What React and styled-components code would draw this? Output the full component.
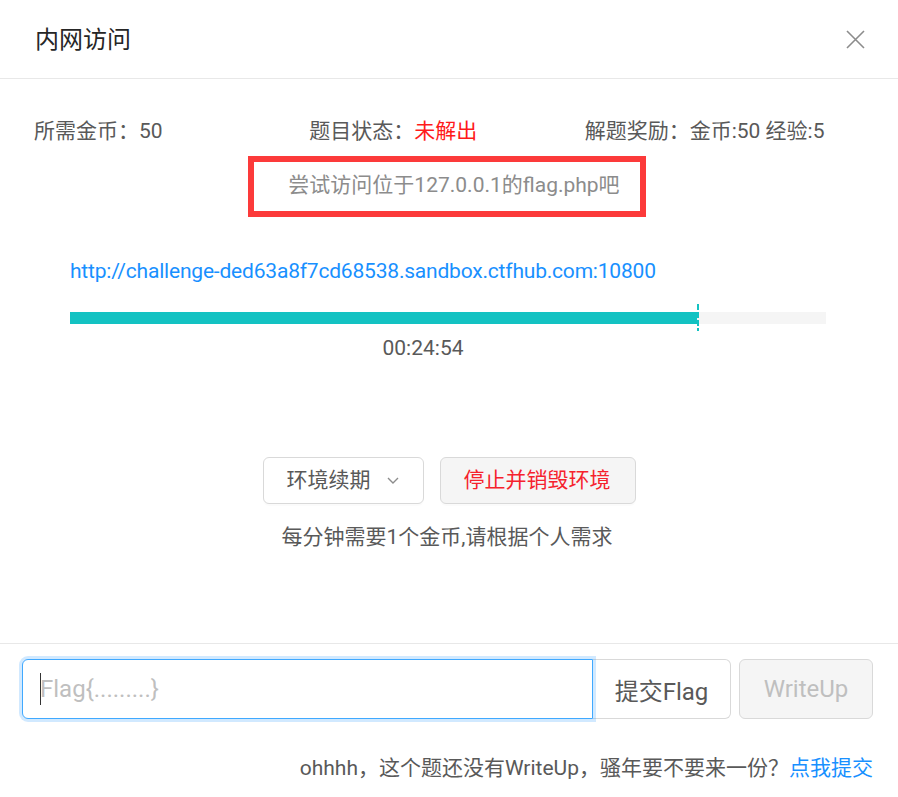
import React from 'react';
import styled, { createGlobalStyle } from 'styled-components';

const GlobalStyle = createGlobalStyle`
  html, body {
    margin: 0;
    padding: 0;
    background: #fff;
  }
  body {
    font-family: Roboto, "Noto Sans CJK SC", sans-serif;
    color: #595959;
  }
  * {
    box-sizing: border-box;
  }
`;

const CloseIcon = () => (
  <svg width="19" height="19" viewBox="0 0 19 19" fill="none">
    <path d="M1 1 L18 18 M18 1 L1 18" stroke="#8c8c8c" strokeWidth="1.6" />
  </svg>
);

const ChevronDown = () => (
  <svg width="12" height="7" viewBox="0 0 12 7" fill="none">
    <path d="M1 1 L6 6 L11 1" stroke="#8c8c8c" strokeWidth="1.4" />
  </svg>
);

export default function App() {
  return (
    <Modal>
      <GlobalStyle />
      <Header>
        <Title>内网访问</Title>
        <CloseButton aria-label="close">
          <CloseIcon />
        </CloseButton>
      </Header>

      <Body>
        <InfoRow>
          <InfoCol>所需金币：50</InfoCol>
          <InfoCol>
            题目状态：<Unsolved>未解出</Unsolved>
          </InfoCol>
          <InfoCol>解题奖励：金币:50 经验:5</InfoCol>
        </InfoRow>

        <HintRow>
          <HintBox>尝试访问位于127.0.0.1的flag.php吧</HintBox>
        </HintRow>

        <UrlLine href="#">
          http://challenge-ded63a8f7cd68538.sandbox.ctfhub.com:10800
        </UrlLine>

        <Progress>
          <ProgressFill style={{ width: `${(627 / 756) * 100}%` }} />
          <ProgressMark style={{ left: `${(628 / 756) * 100}%` }} />
        </Progress>
        <Timer>00:24:54</Timer>

        <ActionRow>
          <Button>
            环境续期
            <ChevronDown />
          </Button>
          <Button $danger>停止并销毁环境</Button>
        </ActionRow>
        <Note>每分钟需要1个金币,请根据个人需求</Note>
      </Body>

      <Footer>
        <SubmitRow>
          <FlagField>
            <FlagInput placeholder="Flag{.........}" />
          </FlagField>
          <SubmitButton>提交Flag</SubmitButton>
          <WriteUpButton disabled>WriteUp</WriteUpButton>
        </SubmitRow>
        <FooterText>
          ohhhh，这个题还没有WriteUp，骚年要不要来一份？<Link href="#">点我提交</Link>
        </FooterText>
      </Footer>
    </Modal>
  );
}

const Modal = styled.div`
  width: 898px;
  height: 797px;
  display: flex;
  flex-direction: column;
  background: #fff;
  overflow: hidden;
`;

const Header = styled.div`
  height: 79px;
  flex-shrink: 0;
  display: flex;
  align-items: center;
  justify-content: space-between;
  padding: 0 33px 0 35px;
  border-bottom: 1px solid #e8e8e8;
`;

const Title = styled.div`
  font-size: 24px;
  line-height: 32px;
  color: #262626;
  margin-top: 1px;
`;

const CloseButton = styled.button`
  border: none;
  background: transparent;
  padding: 0;
  width: 19px;
  height: 19px;
  display: flex;
  cursor: pointer;
`;

const Body = styled.div`
  flex: 1;
  padding: 0 38px 0 34px;
  display: flex;
  flex-direction: column;
`;

const InfoRow = styled.div`
  display: grid;
  grid-template-columns: repeat(3, 1fr);
  margin-top: 36px;
  font-size: 21px;
  line-height: 32px;
  color: #595959;
`;

const InfoCol = styled.div`
  white-space: nowrap;
`;

const Unsolved = styled.span`
  color: #ff1a1a;
`;

const HintRow = styled.div`
  display: flex;
  justify-content: center;
  margin-top: 9px;
`;

const HintBox = styled.div`
  border: 6px solid #fc3a3a;
  padding: 7px 20px 10px 34px;
  font-size: 21px;
  line-height: 32px;
  color: #8c8c8c;
  white-space: nowrap;
`;

const UrlLine = styled.a`
  display: block;
  margin: 38px 0 0 36px;
  font-size: 21px;
  line-height: 32px;
  letter-spacing: -0.2px;
  color: #1890ff;
  text-decoration: none;
  white-space: nowrap;
`;

const Progress = styled.div`
  position: relative;
  height: 12px;
  margin: 25px 34px 0 36px;
  background: #f5f5f5;
`;

const ProgressFill = styled.div`
  height: 100%;
  background: #13c2c2;
`;

const ProgressMark = styled.span`
  position: absolute;
  top: -8px;
  bottom: -7px;
  width: 2px;
  margin-left: -1px;
  background: repeating-linear-gradient(
    to bottom,
    #13c2c2 0 6px,
    transparent 6px 8px
  );
`;

const Timer = styled.div`
  margin-top: 8px;
  padding-right: 48px;
  text-align: center;
  font-size: 21px;
  line-height: 32px;
  color: #595959;
`;

const ActionRow = styled.div`
  display: flex;
  justify-content: center;
  gap: 16px;
  margin-top: 93px;
  padding-left: 4px;
`;

const Button = styled.button`
  height: 47px;
  display: inline-flex;
  align-items: center;
  gap: 16px;
  padding: 0 24px 0 23px;
  border: 1px solid #d9d9d9;
  border-radius: 6px;
  background: ${(p) => (p.$danger ? '#f5f5f5' : '#fff')};
  color: ${(p) => (p.$danger ? '#f5222d' : '#595959')};
  font-family: inherit;
  font-size: 21px;
  line-height: 1;
  cursor: pointer;
  box-shadow: 0 2px 0 rgba(0, 0, 0, 0.015);
`;

const Note = styled.div`
  margin-top: 17px;
  text-align: center;
  font-size: 21px;
  line-height: 32px;
  color: #595959;
`;

const Footer = styled.div`
  flex-shrink: 0;
  height: 154px;
  border-top: 1px solid #e8e8e8;
  padding: 15px 25px 0 22px;
`;

const SubmitRow = styled.div`
  display: flex;
  align-items: stretch;
  height: 60px;
`;

const FlagField = styled.div`
  position: relative;
  flex: 1;
  display: flex;

  &::after {
    content: '';
    position: absolute;
    z-index: 2;
    left: 18px;
    top: 14px;
    width: 1px;
    height: 32px;
    background: #333;
  }
`;

const FlagInput = styled.input`
  flex: 1;
  min-width: 0;
  border: 1px solid #40a9ff;
  border-radius: 6px 0 0 6px;
  box-shadow: 0 0 0 3px rgba(24, 144, 255, 0.2);
  padding: 0 17px;
  font-family: inherit;
  font-size: 24px;
  color: #595959;
  outline: none;
  position: relative;
  z-index: 1;

  &::placeholder {
    color: #bfbfbf;
  }
`;

const SubmitButton = styled.button`
  width: 138px;
  border: 1px solid #d9d9d9;
  border-left: none;
  border-radius: 0 6px 6px 0;
  background: #fff;
  color: #595959;
  font-family: inherit;
  font-size: 24px;
  cursor: pointer;
`;

const WriteUpButton = styled.button`
  width: 134px;
  margin-left: 8px;
  border: 1px solid #d9d9d9;
  border-radius: 6px;
  background: #f5f5f5;
  color: #bfbfbf;
  font-family: inherit;
  font-size: 24px;
  cursor: not-allowed;
`;

const FooterText = styled.div`
  margin-top: 33px;
  text-align: right;
  font-size: 21px;
  line-height: 32px;
  color: #595959;
  white-space: nowrap;
`;

const Link = styled.a`
  color: #1890ff;
  text-decoration: none;
`;
